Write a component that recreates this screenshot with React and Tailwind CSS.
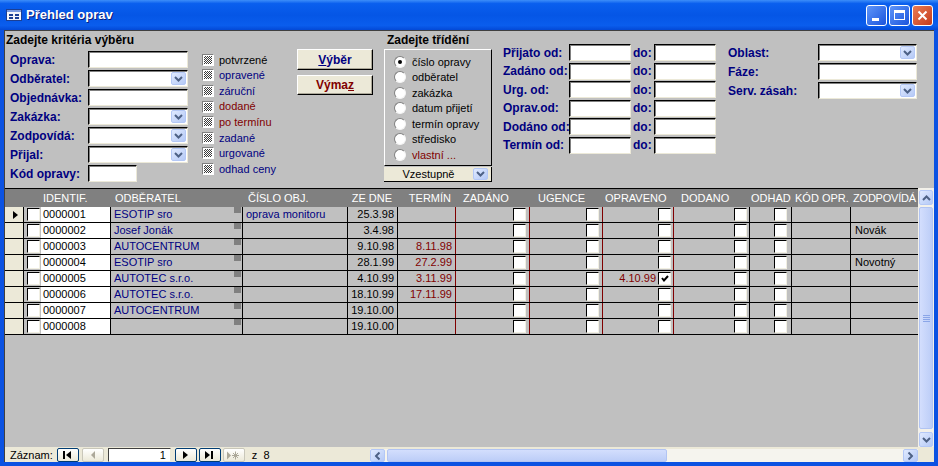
import React from 'react';

const criteria = [
  { label: 'Oprava:' },
  { label: 'Odběratel:', combo: true },
  { label: 'Objednávka:' },
  { label: 'Zakázka:', combo: true },
  { label: 'Zodpovídá:', combo: true },
  { label: 'Přijal:', combo: true },
  { label: 'Kód opravy:', short: true },
];

const filters = [
  { label: 'potvrzené', color: 'text-black' },
  { label: 'opravené', color: 'text-[#000080]' },
  { label: 'záruční', color: 'text-[#000080]' },
  { label: 'dodané', color: 'text-[#800000]' },
  { label: 'po termínu', color: 'text-[#800000]' },
  { label: 'zadané', color: 'text-[#000080]' },
  { label: 'urgované', color: 'text-[#000080]' },
  { label: 'odhad ceny', color: 'text-[#000080]' },
];

const sorts = ['číslo opravy', 'odběratel', 'zakázka', 'datum přijetí', 'termín opravy', 'středisko', 'vlastní ...'];

const dates = ['Přijato od:', 'Zadáno od:', 'Urg. od:', 'Oprav.od:', 'Dodáno od:', 'Termín od:'];

const extra = [
  { label: 'Oblast:', combo: true },
  { label: 'Fáze:' },
  { label: 'Serv. zásah:', combo: true },
];

const heads = [
  { key: 'sel', w: 'w-[19px]' },
  { key: 'chk', w: 'w-[17px]' },
  { key: 'id', w: 'w-[70px]', text: 'IDENTIF.', cls: 'pl-[2px]' },
  { key: 'odb', w: 'w-[132px]', text: 'ODBĚRATEL', cls: 'pl-[4px]' },
  { key: 'obj', w: 'w-[105px]', text: 'ČÍSLO OBJ.', cls: 'pl-[5px]' },
  { key: 'ze', w: 'w-[50px]', text: 'ZE DNE', cls: 'justify-end pr-[6px]' },
  { key: 'term', w: 'w-[58px]', text: 'TERMÍN', cls: 'justify-end pr-[5px]' },
  { key: 'zad', w: 'w-[74px]', text: 'ZADÁNO', cls: 'pl-[7px]' },
  { key: 'urg', w: 'w-[73px]', text: 'UGENCE', cls: 'pl-[8px]' },
  { key: 'opr', w: 'w-[71px]', text: 'OPRAVENO', cls: 'pl-[2px]' },
  { key: 'dod', w: 'w-[76px]', text: 'DODANO', cls: 'pl-[7px]' },
  { key: 'odh', w: 'w-[42px]', text: 'ODHAD', cls: 'pl-[1px]' },
  { key: 'kod', w: 'w-[59px]', text: 'KÓD OPR.', cls: 'pl-[3px]' },
  { key: 'zod', w: 'w-[67px]', text: 'ZODPOVÍDÁ', cls: 'pl-[2px] tracking-[-0.2px]' },
];

const rows = [
  { id: '0000001', odb: 'ESOTIP sro', obj: 'oprava monitoru', ze: '25.3.98' },
  { id: '0000002', odb: 'Josef Jonák', ze: '3.4.98', zodp: 'Novák' },
  { id: '0000003', odb: 'AUTOCENTRUM', ze: '9.10.98', term: '8.11.98' },
  { id: '0000004', odb: 'ESOTIP sro', ze: '28.1.99', term: '27.2.99', zodp: 'Novotný' },
  { id: '0000005', odb: 'AUTOTEC s.r.o.', ze: '4.10.99', term: '3.11.99', opr: '4.10.99' },
  { id: '0000006', odb: 'AUTOTEC s.r.o.', ze: '18.10.99', term: '17.11.99' },
  { id: '0000007', odb: 'AUTOCENTRUM', ze: '19.10.00' },
  { id: '0000008', odb: '', ze: '19.10.00' },
];

function ArrowBtn({ dir = 'down', className = '' }) {
  const rot = { down: '', up: 'rotate-180', left: 'rotate-90', right: '-rotate-90' }[dir];
  return (
    <span className={`flex items-center justify-center rounded-[2px] border border-[#b4c8f6] bg-gradient-to-br from-[#e0eaff] to-[#b5c9f6] ${className}`}>
      <svg width="9" height="6" viewBox="0 0 9 6" className={rot}>
        <polyline points="1,1 4.5,4.5 8,1" fill="none" stroke="#4d6185" strokeWidth="2" />
      </svg>
    </span>
  );
}

function Field({ w = 'w-[100px]', combo }) {
  return (
    <div className={`${w} h-[17px] shrink-0 bg-white border border-t-black border-l-black border-r-[#ece9d8] border-b-[#ece9d8] shadow-[inset_1px_1px_0_#808080] flex items-center justify-end pr-px`}>
      {combo && <ArrowBtn className="w-[15px] h-[13px]" />}
    </div>
  );
}

function Check({ checked }) {
  return (
    <span className="w-[13px] h-[13px] shrink-0 bg-white border border-t-black border-l-black border-r-[#f1efe2] border-b-[#f1efe2] flex items-center justify-center">
      {checked && (
        <svg width="8" height="7" viewBox="0 0 8 7">
          <polyline points="1,3 3,5.5 7,1" fill="none" stroke="#000" strokeWidth="2" />
        </svg>
      )}
    </span>
  );
}

function GrayCheck() {
  return (
    <span className="w-[12px] h-[12px] shrink-0 p-px border border-t-[#808080] border-l-[#808080] border-r-white border-b-white bg-white">
      <span className="block w-full h-full bg-[image:repeating-conic-gradient(#3a3a3a_0%_25%,#ffffff_0%_50%)] bg-[length:2px_2px]" />
    </span>
  );
}

function Radio({ on }) {
  return (
    <span className="w-[12px] h-[12px] shrink-0 rounded-full bg-white border border-t-[#808080] border-l-[#808080] border-r-[#f4f4f4] border-b-[#f4f4f4] flex items-center justify-center">
      {on && <span className="w-[4px] h-[4px] rounded-full bg-black" />}
    </span>
  );
}

function TitleBar() {
  return (
    <div className="h-[30px] shrink-0 flex items-center bg-[linear-gradient(180deg,#3d8ef9_0%,#0a5fee_12%,#0556e6_50%,#0a5ded_85%,#0349d6_100%)]">
      <svg width="16" height="12" viewBox="0 0 16 12" className="ml-[6px]">
        <rect x="0.5" y="0.5" width="15" height="11" fill="#f4f6fb" stroke="#1b3f94" />
        <rect x="1" y="1" width="14" height="2" fill="#7b9be0" />
        <rect x="3" y="5" width="4" height="2" fill="#1b3f94" />
        <rect x="9" y="5" width="4" height="2" fill="#1b3f94" />
        <rect x="3" y="8" width="4" height="2" fill="#1b3f94" />
        <rect x="9" y="8" width="4" height="2" fill="#1b3f94" />
      </svg>
      <span className="ml-[4px] text-[13px] font-bold text-white [text-shadow:1px_1px_0_#0a1e7a]">Přehled oprav</span>
      <div className="ml-auto mr-[5px] flex gap-[2px]">
        <div className="w-[21px] h-[21px] rounded-[3px] border border-white bg-gradient-to-br from-[#5f95f9] to-[#1b53dc] flex items-end pl-[5px] pb-[4px]">
          <span className="w-[7px] h-[3px] bg-white" />
        </div>
        <div className="w-[21px] h-[21px] rounded-[3px] border border-white bg-gradient-to-br from-[#5f95f9] to-[#1b53dc] flex items-center justify-center">
          <span className="w-[11px] h-[10px] border border-white border-t-[3px]" />
        </div>
        <div className="w-[21px] h-[21px] rounded-[3px] border border-white bg-gradient-to-br from-[#ea7b53] to-[#c4391a] flex items-center justify-center">
          <svg width="11" height="11" viewBox="0 0 11 11">
            <path d="M1.5 1.5l8 8M9.5 1.5l-8 8" stroke="#fff" strokeWidth="2" />
          </svg>
        </div>
      </div>
    </div>
  );
}

function Form() {
  return (
    <div className="h-[157px] shrink-0 flex items-start">
      {/* Kritéria */}
      <div className="w-[183px] shrink-0 flex flex-col pt-[2px]">
        <div className="pl-[1px] text-[12px] leading-[14px] font-bold text-black whitespace-nowrap">Zadejte kritéria výběru</div>
        <div className="mt-[4px] flex flex-col gap-[2px]">
          {criteria.map((c) => (
            <div key={c.label} className="h-[17px] flex items-center">
              <span className="w-[83px] shrink-0 pl-[5px] text-[12px] font-bold text-[#000080] whitespace-nowrap">{c.label}</span>
              <Field w={c.short ? 'w-[49px]' : 'w-[100px]'} combo={c.combo} />
            </div>
          ))}
        </div>
      </div>

      {/* Stavy */}
      <div className="w-[95px] shrink-0 ml-[14px] pt-[21px] flex flex-col">
        {filters.map((f) => (
          <div key={f.label} className="h-[15.6px] flex items-center gap-[5px]">
            <GrayCheck />
            <span className={`text-[11px] whitespace-nowrap ${f.color}`}>{f.label}</span>
          </div>
        ))}
      </div>

      {/* Tlačítka */}
      <div className="w-[76px] shrink-0 pt-[18px] flex flex-col gap-[5px]">
        <button className="h-[21px] bg-[#ece9d8] border border-t-white border-l-white border-r-black border-b-black shadow-[inset_-1px_-1px_0_#aca899] text-[12px] font-bold text-[#000080] flex items-center justify-center">
          <span className="underline">V</span>ýběr
        </button>
        <button className="h-[20px] bg-[#ece9d8] border border-t-white border-l-white border-r-black border-b-black shadow-[inset_-1px_-1px_0_#aca899] text-[12px] font-bold text-[#800000] flex items-center justify-center">
          Výma<span className="underline">z</span>
        </button>
      </div>

      {/* Třídění */}
      <div className="w-[108px] shrink-0 ml-[11px] pt-[2px] flex flex-col">
        <div className="pl-[3px] text-[12px] leading-[14px] font-bold text-black whitespace-nowrap">Zadejte třídění</div>
        <div className="mt-[2px] h-[117px] border border-t-white border-l-white border-r-black border-b-black pt-[4px] pl-[9px] flex flex-col">
          {sorts.map((s, i) => (
            <div key={s} className="h-[15.5px] flex items-center gap-[6px]">
              <Radio on={i === 0} />
              <span className={`text-[11px] whitespace-nowrap ${i === 6 ? 'text-[#800000]' : 'text-black'}`}>{s}</span>
            </div>
          ))}
        </div>
        <div className="mt-px h-[15px] bg-[#ece9d8] border-r border-b border-black flex items-center">
          <span className="flex-1 text-center text-[11px] text-black">Vzestupně</span>
          <ArrowBtn className="w-[15px] h-[12px] mr-[3px]" />
        </div>
      </div>

      {/* Data */}
      <div className="ml-[11px] shrink-0 pt-[13px] flex flex-col gap-[1.6px]">
        {dates.map((d) => (
          <div key={d} className="h-[17px] flex items-center">
            <span className="w-[66px] shrink-0 text-[12px] font-bold text-[#000080] whitespace-nowrap">{d}</span>
            <Field w="w-[62px]" />
            <span className="w-[23px] shrink-0 pl-[2px] text-[12px] font-bold text-[#000080]">do:</span>
            <Field w="w-[62px]" />
          </div>
        ))}
      </div>

      {/* Oblast */}
      <div className="ml-[12px] shrink-0 pt-[13px] flex flex-col gap-[2px]">
        {extra.map((e) => (
          <div key={e.label} className="h-[17px] flex items-center">
            <span className="w-[90px] shrink-0 text-[12px] font-bold text-[#000080] whitespace-nowrap">{e.label}</span>
            <Field w="w-[99px]" combo={e.combo} />
          </div>
        ))}
      </div>
    </div>
  );
}

function Row({ r, first }) {
  return (
    <div className="h-[16px] shrink-0 flex border-b border-black text-[11px] text-black">
      <div className="w-[19px] shrink-0 border-r border-black bg-[#ece9d8] flex items-center pl-[8px]">
        {first && (
          <svg width="5" height="8" viewBox="0 0 5 8">
            <path d="M0 0v8l5-4z" fill="#000" />
          </svg>
        )}
      </div>
      <div className="w-[17px] shrink-0 flex items-center pl-[3px]">
        <Check />
      </div>
      <div className="w-[70px] shrink-0 border-r border-black bg-white flex items-center pl-[2px]">{r.id}</div>
      <div className="w-[132px] shrink-0 border-r border-black flex justify-between pl-[3px] text-[#000080]">
        <span className="self-center whitespace-nowrap">{r.odb}</span>
        <span className="w-[7px] h-[6px] mr-[1px] bg-[#808080]" />
      </div>
      <div className="w-[105px] shrink-0 border-r border-black flex items-center pl-[3px] text-[#000080] whitespace-nowrap overflow-hidden">{r.obj}</div>
      <div className="w-[50px] shrink-0 border-r border-black flex items-center justify-end pr-[3px]">{r.ze}</div>
      <div className="w-[58px] shrink-0 border-r border-[#800000] flex items-center justify-end pr-[3px] text-[#800000]">{r.term}</div>
      <div className="w-[74px] shrink-0 border-r border-[#800000] flex items-center justify-end pr-[3px]">
        <Check />
      </div>
      <div className="w-[73px] shrink-0 border-r border-[#800000] flex items-center justify-end pr-[3px]">
        <Check />
      </div>
      <div className="w-[71px] shrink-0 border-r border-[#800000] flex items-center justify-end gap-[2px] pr-[2px]">
        {r.opr && <span className="text-[#800000]">{r.opr}</span>}
        <Check checked={!!r.opr} />
      </div>
      <div className="w-[76px] shrink-0 border-r border-black flex items-center justify-end pr-[2px]">
        <Check />
      </div>
      <div className="w-[42px] shrink-0 border-r border-black flex items-center justify-end pr-[4px]">
        <Check />
      </div>
      <div className="w-[59px] shrink-0 border-r border-black" />
      <div className="w-[67px] shrink-0 flex items-center pl-[4px] whitespace-nowrap">{r.zodp}</div>
    </div>
  );
}

function VScroll() {
  return (
    <div className="w-[16px] shrink-0 flex flex-col pt-[2px] px-px bg-[#f3f1ea]">
      <ArrowBtn dir="up" className="h-[15px] shrink-0" />
      <div className="flex-1 mt-[2px] mb-[3px] rounded-[2px] border border-[#b1c4f3] bg-gradient-to-r from-[#d3defd] to-[#bccdf7] flex flex-col items-center justify-center gap-px">
        <span className="w-[7px] h-px bg-[#8ba6e8]" />
        <span className="w-[7px] h-px bg-[#8ba6e8]" />
        <span className="w-[7px] h-px bg-[#8ba6e8]" />
        <span className="w-[7px] h-px bg-[#8ba6e8]" />
      </div>
      <ArrowBtn dir="down" className="h-[15px] shrink-0" />
    </div>
  );
}

function Grid() {
  return (
    <div className="flex-1 flex min-h-0">
      <div className="w-[913px] shrink-0 flex flex-col border-t border-black overflow-hidden">
        <div className="h-[18px] shrink-0 flex bg-[#808080] text-[11px] text-white">
          {heads.map((h) => (
            <div key={h.key} className={`${h.w} shrink-0 flex items-center whitespace-nowrap overflow-hidden ${h.cls || ''}`}>
              {h.text}
            </div>
          ))}
        </div>
        {rows.map((r, i) => (
          <Row key={r.id} r={r} first={i === 0} />
        ))}
      </div>
      <VScroll />
    </div>
  );
}

function NavBtn({ disabled, children, className = '' }) {
  return (
    <span className={`h-[14px] w-[22px] shrink-0 rounded-[2px] border bg-gradient-to-b from-white to-[#ece9d8] flex items-center justify-center ${disabled ? 'border-[#c9c7ba]' : 'border-[#003c74]'} ${className}`}>
      {children}
    </span>
  );
}

function NavBar() {
  return (
    <div className="h-[15px] shrink-0 bg-[#ece9d8] flex items-start text-[11px] text-black">
      <span className="ml-[5px] mt-px leading-[14px]">Záznam:</span>
      <NavBtn className="ml-[4px] mt-px">
        <svg width="9" height="8" viewBox="0 0 9 8">
          <rect x="0" y="0" width="2" height="8" fill="#000" />
          <path d="M8 0v8L3 4z" fill="#000" />
        </svg>
      </NavBtn>
      <NavBtn disabled className="ml-[3px] mt-px">
        <svg width="5" height="8" viewBox="0 0 5 8">
          <path d="M5 0v8L1 4z" fill="#aca899" />
        </svg>
      </NavBtn>
      <span className="ml-[4px] mt-px w-[63px] h-[14px] bg-white border border-t-[#404040] border-l-[#404040] border-r-[#ece9d8] border-b-[#ece9d8] flex items-center justify-end pr-[4px] leading-none">1</span>
      <NavBtn className="ml-[4px] mt-px">
        <svg width="5" height="8" viewBox="0 0 5 8">
          <path d="M0 0v8l5-4z" fill="#000" />
        </svg>
      </NavBtn>
      <NavBtn className="ml-[2px] mt-px">
        <svg width="9" height="8" viewBox="0 0 9 8">
          <path d="M0 0v8l5-4z" fill="#000" />
          <rect x="6" y="0" width="2" height="8" fill="#000" />
        </svg>
      </NavBtn>
      <NavBtn disabled className="ml-[2px] mt-px w-[20px]">
        <svg width="13" height="9" viewBox="0 0 13 9">
          <path d="M0 0.5v8l4-4z" fill="#aca899" />
          <path d="M8.5 0.5v8M5 4.5h7M6 2l5 5M11 2l-5 5" stroke="#aca899" strokeWidth="1" />
        </svg>
      </NavBtn>
      <span className="ml-[7px] mt-px leading-[14px]">z&nbsp;&nbsp;8</span>
      <div className="ml-auto mt-[2px] w-[548px] h-[13px] flex bg-[#f5f4ee]">
        <ArrowBtn dir="left" className="w-[15px] h-[13px] shrink-0" />
        <div className="ml-[2px] w-[280px] h-[13px] rounded-[2px] border border-[#b1c4f3] bg-gradient-to-b from-[#d3defd] to-[#bccdf7]" />
        <div className="flex-1" />
        <ArrowBtn dir="right" className="w-[15px] h-[13px] shrink-0" />
      </div>
      <div className="w-[16px] shrink-0" />
    </div>
  );
}

export default function App() {
  return (
    <div className="w-[938px] h-[466px] flex flex-col bg-[#0b52e2] font-['Liberation_Sans',Arial,sans-serif] overflow-hidden select-none">
      <TitleBar />
      <div className="flex-1 min-h-0 mx-[4px] mb-[4px] bg-[#c0c0c0] border-t border-l border-[#404040] flex flex-col">
        <Form />
        <Grid />
        <NavBar />
      </div>
    </div>
  );
}
